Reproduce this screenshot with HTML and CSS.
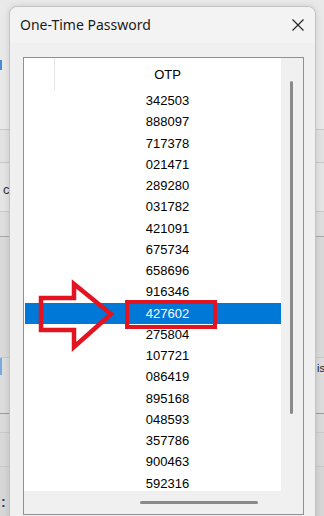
FILE: index.html
```html
<!DOCTYPE html>
<html>
<head>
  <meta http-equiv="Content-type" content="text/html; charset=utf-8">
  <title>One-Time Password</title>
  <link rel="stylesheet" href="styles.css">
</head>
<body>
  <!-- window behind the dialog -->
  <div class="backdrop">
    <div class="band b1"><span class="mark-top"></span></div>
    <div class="band b2"></div>
    <div class="band b3"><span class="peek-left">c</span></div>
    <div class="band b4"></div>
    <div class="band b5"></div>
    <div class="band b6"><span class="mark-left"></span><span class="peek-right">is</span></div>
    <div class="band b7"></div>
    <div class="band b8"></div>
    <div class="band b9"><span class="dots">:</span></div>
  </div>

  <div class="dialog">
    <div class="titlebar">
      <span class="title">One-Time Password</span>
      <svg class="close" width="12" height="12" viewBox="0 0 12 12">
        <path d="M0.5 0.5 L11.5 11.5 M11.5 0.5 L0.5 11.5" stroke="#262626" stroke-width="1.2" fill="none"/>
      </svg>
    </div>

    <div class="listbox">
      <div class="content">
        <div class="header">
          <div class="cell-first"></div>
          <div class="cell-otp">OTP</div>
        </div>
        <div class="row"><div class="cell-first"></div><div class="cell-otp">342503</div></div>
        <div class="row"><div class="cell-first"></div><div class="cell-otp">888097</div></div>
        <div class="row"><div class="cell-first"></div><div class="cell-otp">717378</div></div>
        <div class="row"><div class="cell-first"></div><div class="cell-otp">021471</div></div>
        <div class="row"><div class="cell-first"></div><div class="cell-otp">289280</div></div>
        <div class="row"><div class="cell-first"></div><div class="cell-otp">031782</div></div>
        <div class="row"><div class="cell-first"></div><div class="cell-otp">421091</div></div>
        <div class="row"><div class="cell-first"></div><div class="cell-otp">675734</div></div>
        <div class="row"><div class="cell-first"></div><div class="cell-otp">658696</div></div>
        <div class="row"><div class="cell-first"></div><div class="cell-otp">916346</div></div>
        <div class="row selected"><div class="cell-first"></div><div class="cell-otp">427602</div></div>
        <div class="row"><div class="cell-first"></div><div class="cell-otp">275804</div></div>
        <div class="row"><div class="cell-first"></div><div class="cell-otp">107721</div></div>
        <div class="row"><div class="cell-first"></div><div class="cell-otp">086419</div></div>
        <div class="row"><div class="cell-first"></div><div class="cell-otp">895168</div></div>
        <div class="row"><div class="cell-first"></div><div class="cell-otp">048593</div></div>
        <div class="row"><div class="cell-first"></div><div class="cell-otp">357786</div></div>
        <div class="row"><div class="cell-first"></div><div class="cell-otp">900463</div></div>
        <div class="row"><div class="cell-first"></div><div class="cell-otp">592316</div></div>
      </div>
      <div class="vscroll"><div class="vthumb"></div></div>
      <div class="hscroll"><div class="hthumb"></div></div>
      <div class="corner"></div>
    </div>
  </div>

  <!-- red annotation -->
  <div class="highlight"></div>
  <svg class="arrow" width="324" height="516" viewBox="0 0 324 516">
    <polygon points="41,298 74,298 74,284 111,314 74,347 74,330 41,330" fill="none" stroke="#e3131f" stroke-width="4.5" stroke-linejoin="miter"/>
  </svg>
</body>
</html>
```

FILE: styles.css
```css
body {
  margin: 0;
  width: 324px;
  height: 516px;
  overflow: hidden;
  background: #e6e6e6;
  font-family: "Liberation Sans", Arial, sans-serif;
}

/* background window */
.backdrop {
  display: flex;
  flex-direction: column;
  height: 516px;
}
.band {
  position: relative;
  box-sizing: border-box;
  border-bottom: 1px solid #c9c9c9;
}
.b1 { height: 130px; background: #e9e9e9; }
.b2 { height: 33px; background: #e2e2e2; }
.b3 { height: 49px; background: #e4e4e4; }
.b4 { height: 25px; background: #dedede; border-bottom-color: #a9a9a9; }
.b5 { height: 121px; background: #d9d9d9; }
.b6 { height: 56px; background: #dcdcdc; border-bottom-color: #9c9c9c; }
.b7 { height: 19px; background: #dadada; }
.b8 { height: 34px; background: #d8d8d8; }
.b9 { height: 49px; background: #d6d6d6; border-bottom: none; }

.mark-top {
  position: absolute;
  left: 0;
  top: 60px;
  width: 2px;
  height: 10px;
  background: #4a8ad8;
}
.mark-left {
  position: absolute;
  left: 0;
  top: 0;
  width: 2px;
  height: 17px;
  background: #7aa9e0;
}
.peek-left {
  position: absolute;
  left: 3px;
  top: 19px;
  font-size: 13px;
  color: #333;
}
.peek-right {
  position: absolute;
  left: 317px;
  top: 4px;
  font-size: 11px;
  color: #222;
}
.dots {
  position: absolute;
  left: 1px;
  top: 27px;
  font-size: 14px;
  font-weight: bold;
  color: #1f3f6f;
}

/* dialog */
.dialog {
  position: absolute;
  left: 9px;
  top: 6px;
  width: 307px;
  height: 520px;
  box-sizing: border-box;
  background: #f0f0f0;
  border: 1px solid #c3c3c3;
  border-radius: 8px 8px 0 0;
  box-shadow: 0 0 6px rgba(0, 0, 0, 0.12);
}
.titlebar {
  display: flex;
  align-items: center;
  justify-content: space-between;
  height: 36px;
  padding: 0 10px 0 10px;
  background: #f3f3f3;
  border-radius: 8px 8px 0 0;
}
.title {
  font-family: "Noto Sans", sans-serif;
  font-size: 14px;
  color: #1b1b1b;
  margin-top: -1px;
}
.close {
  margin-right: 1px;
  margin-top: -1px;
}

.listbox {
  display: grid;
  grid-template-columns: 257px 22px;
  grid-template-rows: 433px 23px;
  width: 281px;
  height: 458px;
  box-sizing: border-box;
  margin: 14px 0 0 13px;
  border: 1px solid #8f9095;
}
.content {
  background: #fff;
  overflow: hidden;
}
.header {
  display: flex;
  height: 32px;
  font-size: 13px;
  color: #000;
}
.header .cell-first {
  border-right: 1px solid #e5e5e5;
}
.cell-first {
  width: 30px;
  flex: none;
}
.cell-otp {
  width: 225px;
  text-align: center;
  line-height: 32px;
  padding-top: 1px;
}
.row {
  display: flex;
  height: 21.25px;
  margin-left: 1px;
  font-size: 13px;
  color: #000;
}
.row .cell-otp {
  line-height: 21.25px;
  padding-top: 0;
}
.row.selected {
  background: #0078d7;
  color: #fff;
}

.vscroll {
  background: #f0f0f0;
  padding: 23px 0 0 9px;
}
.vthumb {
  width: 3px;
  height: 333px;
  border-radius: 2px;
  background: #8a8a8a;
}
.hscroll {
  background: #f0f0f0;
  padding: 10px 0 0 116px;
}
.hthumb {
  width: 118px;
  height: 3px;
  border-radius: 2px;
  background: #8a8a8a;
}
.corner {
  background: #f0f0f0;
}

/* annotation */
.highlight {
  position: absolute;
  left: 125px;
  top: 300px;
  width: 92px;
  height: 29px;
  box-sizing: border-box;
  border: 4.5px solid #e3131f;
}
.arrow {
  position: absolute;
  left: 0;
  top: 0;
}
```
